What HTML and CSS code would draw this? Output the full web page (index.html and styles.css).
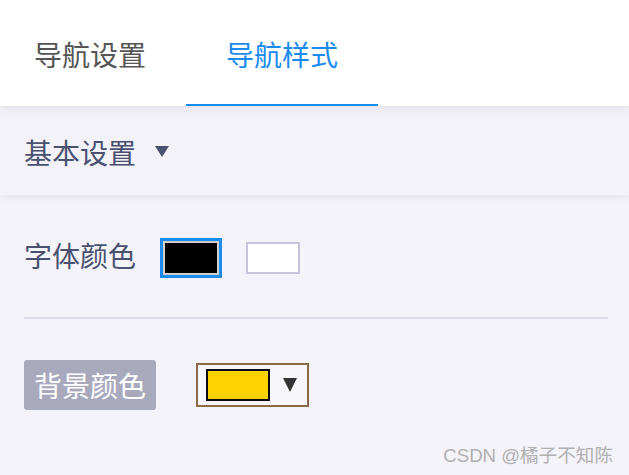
FILE: index.html
```html
<!DOCTYPE html>
<html lang="zh">
<head>
<meta charset="utf-8">
<link rel="stylesheet" href="styles.css">
</head>
<body>
<div class="header">
  <div class="tab first">导航设置</div>
  <div class="tab active">导航样式</div>
</div>
<div class="section">
  <span class="section-title">基本设置</span>
  <span class="caret"></span>
</div>
<div class="content">
  <div class="row row-font">
    <span class="label">字体颜色</span>
    <span class="swatch swatch-black"></span>
    <span class="swatch swatch-white"></span>
  </div>
  <div class="divider"></div>
  <div class="row row-bg">
    <span class="tag">背景颜色</span>
    <div class="picker">
      <span class="picker-color"></span>
      <span class="picker-arrow"></span>
    </div>
  </div>
</div>
<div class="watermark">CSDN @橘子不知陈</div>
</body>
</html>
```
FILE: styles.css
```css
html, body {
  margin: 0;
  padding: 0;
}
body {
  width: 629px;
  height: 475px;
  overflow: hidden;
  background: #f4f3f9;
  font-family: "Noto Sans CJK SC", "Noto Sans", sans-serif;
  position: relative;
}
.header {
  display: flex;
  height: 106px;
  background: #fff;
  position: relative;
  z-index: 2;
  box-shadow: 0 3px 8px rgba(60, 60, 90, 0.08);
}
.tab {
  box-sizing: border-box;
  height: 106px;
  line-height: 108px;
  padding: 0 40px;
  font-size: 28px;
  color: #555;
}
.tab.first {
  padding-left: 34px;
}
.tab.active {
  color: #1a8cf0;
  border-bottom: 2px solid #1a8cf0;
}
.section {
  display: flex;
  align-items: center;
  height: 89px;
  padding-left: 24px;
  background: #f3f2f8;
  position: relative;
  z-index: 1;
  box-shadow: 0 3px 8px rgba(60, 60, 90, 0.08);
}
.section-title {
  font-size: 28px;
  color: #4a5070;
  line-height: 1;
  margin-top: 2px;
}
.caret {
  width: 0;
  height: 0;
  margin-left: 19px;
  margin-top: 2px;
  border-left: 7px solid transparent;
  border-right: 7px solid transparent;
  border-top: 11px solid #4a5070;
}
.content {
  padding: 0 21px 0 24px;
}
.row {
  display: flex;
  align-items: center;
}
.row-font {
  height: 122px;
}
.label {
  font-size: 28px;
  color: #4a5070;
  line-height: 1;
  margin-top: -2px;
}
.swatch {
  display: block;
  box-sizing: border-box;
  margin-top: 4px;
}
.swatch-black {
  width: 56px;
  height: 34px;
  margin-left: 27px;
  background: #000;
  border: 2px solid #cfcfcf;
  outline: 3px solid #1a8cf0;
}
.swatch-white {
  width: 54px;
  height: 32px;
  margin-left: 27px;
  background: #fff;
  border: 2px solid #c6c4d8;
}
.divider {
  height: 2px;
  background: #dcdbea;
}
.row-bg {
  padding-top: 41px;
}
.tag {
  box-sizing: border-box;
  height: 50px;
  padding: 0 10px;
  line-height: 50px;
  font-size: 28px;
  color: #fff;
  background: #a9a9bd;
  border-radius: 3px;
}
.picker {
  box-sizing: border-box;
  display: flex;
  align-items: center;
  width: 113px;
  height: 44px;
  margin-left: 40px;
  padding-left: 8px;
  border: 2px solid #8b6b47;
  background: #f7f6fa;
}
.picker-color {
  box-sizing: border-box;
  width: 64px;
  height: 32px;
  background: #ffd200;
  border: 2px solid #0a0a14;
}
.picker-arrow {
  width: 0;
  height: 0;
  margin-left: 13px;
  border-left: 7px solid transparent;
  border-right: 7px solid transparent;
  border-top: 14px solid #333;
}
.watermark {
  position: absolute;
  right: 16px;
  top: 443px;
  font-size: 18.6px;
  line-height: 26px;
  color: #b0b0b0;
  font-family: "Liberation Sans", "Noto Sans CJK SC", sans-serif;
}
```
